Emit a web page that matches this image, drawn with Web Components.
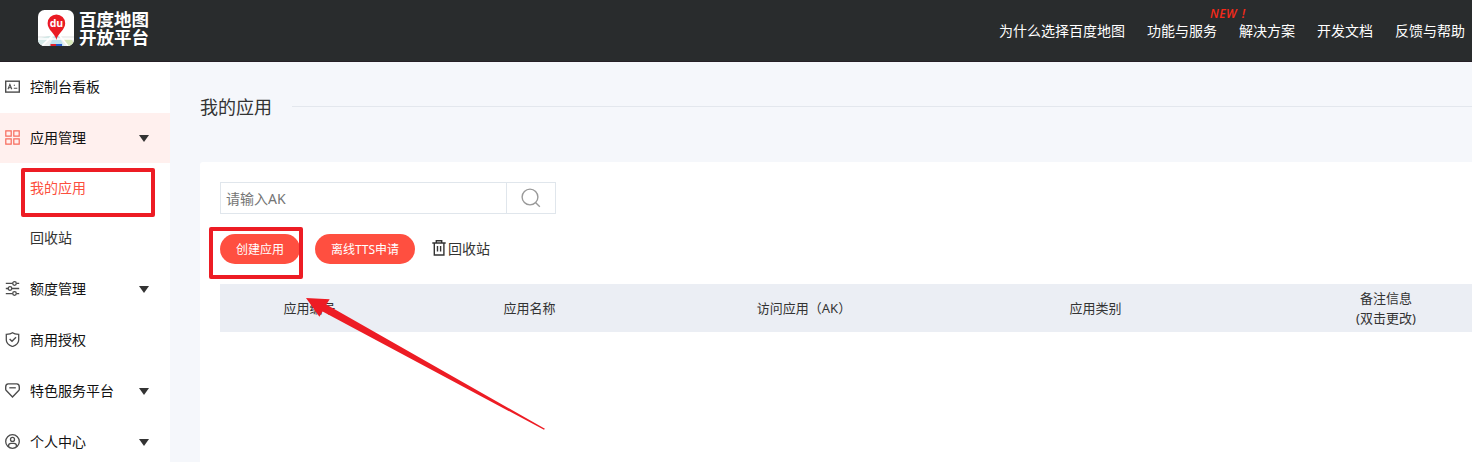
<!DOCTYPE html>
<html lang="zh-CN">
<head>
<meta charset="utf-8">
<title>百度地图开放平台</title>
<style>
html,body{margin:0;height:100%;overflow:hidden}
body{font:14px/20px "Noto Sans","Noto Sans CJK SC",sans-serif;color:#333;background:#f5f7fb}
</style>
</head>
<body>
<console-app></console-app>
<script>
const define = (name, css, html) => customElements.define(name, class extends HTMLElement {
  constructor() {
    super();
    const t = document.createElement('template');
    t.innerHTML = `<style>*{box-sizing:border-box}${css}</style>${html}`;
    this.attachShadow({mode: 'open'}).append(t.content.cloneNode(true));
  }
});

const icons = {
  board: '<rect x=".7" y="2.2" width="13.6" height="10.9" stroke-width="1.4"/><path d="M3 10.2L4.9 5.4L6.8 10.2M3.7 8.7H6.1M8.8 6.3H10M8.8 9.2H12.3" stroke-width="1.1"/>',
  grid: '<path d="M.8 .8H6.2V6.2H.8ZM8.8 .8H14.2V6.2H8.8ZM.8 8.8H6.2V14.2H.8ZM8.8 8.8H14.2V14.2H8.8Z" stroke-width="1.2"/>',
  sliders: '<g stroke-width="1.3"><path d="M.8 2.3H7.5M11.5 2.3H14.2M.8 7.5H3M7 7.5H14.2M.8 12.7H7.5M11.5 12.7H14.2"/><circle cx="9.5" cy="2.5" r="1.8"/><circle cx="5" cy="7.5" r="1.8"/><circle cx="9.5" cy="12.5" r="1.8"/></g>',
  shield: '<path d="M7.5 .8C9 2 11.2 2.3 13.7 2.4V8C13.7 11 11 13.3 7.5 14.5C4 13.3 1.3 11 1.3 8V2.4C3.8 2.3 6 2 7.5 .8Z" stroke-width="1.3"/><path d="M4.6 7L7 9.3L11 5.3" stroke-width="1.4"/>',
  gem: '<path d="M3.2 .9H11.8Q14.3 1 14.3 4V6.2Q14.3 7 13.7 7.5L7.5 14L1.3 7.5Q.7 7 .7 6.2V4Q.7 1 3.2 .9Z" stroke-width="1.4"/><path d="M4.3 4.8H10.8" stroke-width="1.3"/>',
  user: '<circle cx="7.5" cy="7.5" r="6.8" stroke-width="1.3"/><circle cx="7.5" cy="5.4" r="2" stroke-width="1.3"/><path d="M3.6 12.8V11.5Q3.6 9.3 6 9.3H9Q11.4 9.3 11.4 11.5V12.8" stroke-width="1.3"/>'
};

customElements.define('side-icon', class extends HTMLElement {
  connectedCallback() {
    this.attachShadow({mode: 'open'}).innerHTML =
      `<style>:host{display:block;width:15px;height:15px}svg{display:block}</style>
       <svg width="15" height="15" viewBox="0 0 15 15" fill="none" stroke="currentColor">${icons[this.getAttribute('name')]}</svg>`;
  }
});

define('side-item', `
:host{display:flex;align-items:center;height:50px;margin-bottom:1px;padding-left:5px;color:#111}
:host([active]){background:#fff0ee;margin-bottom:0}
:host([sub]){padding-left:30px;margin-bottom:0;color:#333}
:host([sub][last]){margin-bottom:1px}
:host([current]){color:#fc4f3e}
.icon{color:#4c4c4c;margin:0 10px 1px 0}
:host([active]) .icon{color:#f76a5b}
:host([sub]) .icon{display:none}
.label{flex:1}
.arrow{display:none;width:0;border:5px solid transparent;border-top:7px solid #333;border-bottom:0;margin-right:21px}
:host([open]) .arrow{display:block}`,
`<div class="icon"><slot name="icon"></slot></div><div class="label"><slot></slot></div><div class="arrow"></div>`);

define('side-menu', `:host{display:block;width:170px;background:#fff}`, `
<side-item><side-icon slot="icon" name="board"></side-icon>控制台看板</side-item>
<side-item active open><side-icon slot="icon" name="grid"></side-icon>应用管理</side-item>
<side-item sub current>我的应用</side-item>
<side-item sub last>回收站</side-item>
<side-item open><side-icon slot="icon" name="sliders"></side-icon>额度管理</side-item>
<side-item><side-icon slot="icon" name="shield"></side-icon>商用授权</side-item>
<side-item open><side-icon slot="icon" name="gem"></side-icon>特色服务平台</side-item>
<side-item open><side-icon slot="icon" name="user"></side-icon>个人中心</side-item>`);

define('map-logo', `
:host{display:flex;gap:5px;align-items:center;color:#fff}
svg{display:block}
.name{font:700 17.5px/18px "Noto Sans CJK SC",sans-serif;white-space:nowrap}
.name div{height:18px}
text{font:bold 10.5px "Open Sans",sans-serif}`,
`<svg width="36" height="36" viewBox="0 0 36 36">
<defs><clipPath id="c"><rect width="36" height="36" rx="6.5"/></clipPath></defs>
<g clip-path="url(#c)"><rect width="36" height="36" fill="#fff"/>
<path d="M0 26H36V36H0Z" fill="#eef0f0"/>
<path d="M0 29L10 26H14L2 36H0Z" fill="#d5e9e8"/>
<path d="M16 26H21L26 36H11Z" fill="#bfe3ef"/>
<path d="M24 29H33L36 33V36H29Z" fill="#d9e9bd"/>
<path d="M14 26L4 36M22 26L30 36M0 29H36" stroke="#fff" stroke-width="1.6"/>
<path d="M12.5 34H18V36H12.5Z" fill="#e1202a"/><path d="M18 34H24V36H18Z" fill="#2457c5"/></g>
<path d="M18.4 30C17.4 24 9.6 20 9.6 13.3A8.8 8.8 0 0 1 27.2 13.3C27.2 20 19.4 24 18.4 30Z" fill="#ea1b24"/>
<text x="18.4" y="17.2" text-anchor="middle" fill="#fff">du</text></svg>
<div class="name"><div>百度地图</div><div>开放平台</div></div>`);

define('top-bar', `
:host{display:flex;justify-content:space-between;height:62px;background:#292c2d;color:#fff;padding:0 7px 0 38px;border-bottom:1px solid #251f26}
map-logo{height:36px;margin-top:10px}
nav{display:flex;gap:22px;margin-top:21px;white-space:nowrap}
.item{position:relative}
.new{position:absolute;left:63px;top:-16px;font:italic 600 12px/18px "Open Sans",sans-serif;letter-spacing:.4px;word-spacing:1.5px;color:#f52a1a}`,
`<map-logo></map-logo><nav><span>为什么选择百度地图</span><span class="item">功能与服务<span class="new">NEW !</span></span><span>解决方案</span><span>开发文档</span><span>反馈与帮助</span></nav>`);

define('search-box', `
:host{display:flex;width:336px;height:32px;border:1px solid #e0e6ec;color:#757575}
.field{width:285px;padding:6px 5px;line-height:20px}
.go{flex:1;border-left:1px solid #e0e6ec;display:flex;align-items:center;justify-content:center}`,
`<div class="field">请输入AK</div><div class="go"><svg width="20" height="20" viewBox="0 0 20 20" fill="none" stroke="#999" stroke-width="1.4"><circle cx="9" cy="9" r="7.9"/><path d="M14.5 14.5L18.8 18.8"/></svg></div>`);

define('pill-button', `
:host{display:block;height:30px;border-radius:15px;background:#ff4f40;color:#fff;font-size:12px;line-height:31px;text-align:center;white-space:nowrap}`, `<slot></slot>`);

define('app-table', `
:host{display:grid;grid-template-columns:179px 261px 284px 303px 278px;align-items:center;height:48px;padding-bottom:1px;background:#ebeef4;font-size:13px;text-align:center;width:1305px}
.ak{padding-left:4px}`,
`<div>应用编号</div><div>应用名称</div><div class="ak">访问应用（AK）</div><div>应用类别</div><div>备注信息<br>(双击更改)</div>`);

define('app-panel', `
:host{display:block;flex:1;min-width:0;padding:35px 0 0 30px;overflow:hidden}
.title{display:flex;align-items:center;gap:20px;height:20px;font-size:18px;white-space:nowrap}
.title i{flex:1;height:1px;background:#e3e7ed;margin-top:-1px}
.card{margin-top:45px;height:300px;background:#fff;border-radius:3px 0 0 0;padding:20px 0 0 20px;overflow:hidden}
.tools{display:flex;align-items:center;margin:20px 0}
.create{width:80px;margin-right:15px}.tts{width:100px;margin-right:17px}
.bin{display:flex;align-items:center;gap:2px}.bin svg{margin-top:-2px}`,
`<div class="title"><span>我的应用</span><i></i></div>
<div class="card"><search-box></search-box>
<div class="tools"><pill-button class="create">创建应用</pill-button><pill-button class="tts">离线TTS申请</pill-button>
<div class="bin"><svg width="14" height="16" viewBox="0 0 14 16" fill="none" stroke="#333" stroke-width="1.4"><path d="M.3 3H13.7M4.3 2.8V.8H9.7V2.8M2.3 3V15H11.9V3M5.5 6V11.5M8.6 6V11.5"/></svg><span>回收站</span></div></div>
<app-table></app-table></div>`);

define('mark-box', `:host{display:block;position:absolute;border:4px solid #ed1c24;border-radius:2px}`, ``);

define('console-app', `
:host{display:flex;flex-direction:column;height:462px;position:relative;overflow:hidden}
main{display:flex;flex:1;min-height:0}
.m1{left:20.5px;top:168px;width:134px;height:49px}
.m2{left:209px;top:227px;width:94px;height:52px}
.arrow{position:absolute;left:300px;top:290px}`,
`<top-bar></top-bar><main><side-menu></side-menu><app-panel></app-panel></main>
<mark-box class="m1"></mark-box><mark-box class="m2"></mark-box>
<svg class="arrow" width="250" height="145" viewBox="300 290 250 145"><path d="M306 298L329.7 299.3L326.3 304.6L544.9 428.8L544 429.8L322.6 311.6L319.4 316.8Z" fill="#ed1c24"/></svg>`);
</script>
</body>
</html>
